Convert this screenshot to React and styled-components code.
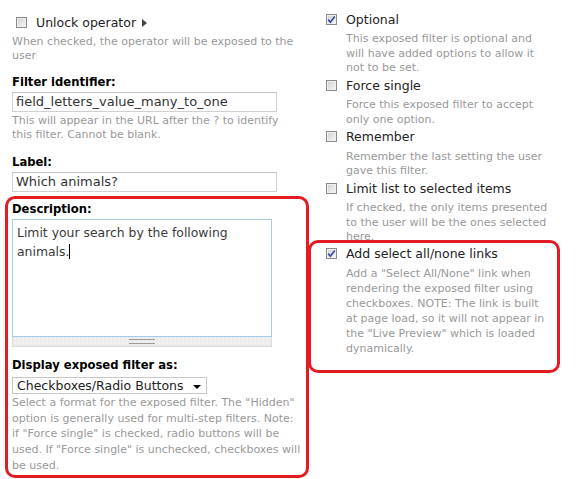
import React from "react";
import styled, { createGlobalStyle } from "styled-components";

const GlobalStyle = createGlobalStyle`
  html, body {
    margin: 0;
    background: #fff;
  }
  body {
    font-family: "DejaVu Sans", Verdana, sans-serif;
    color: #222;
  }
`;

const Page = styled.div`
  display: flex;
  align-items: flex-start;
  width: 580px;
  height: 479px;
  padding-left: 5px;
  box-sizing: border-box;
  overflow: hidden;
`;

const LeftColumn = styled.div`
  width: 304px;
  flex: none;
  box-sizing: border-box;
  padding-left: 7px;
  display: flex;
  flex-direction: column;
`;

const RightColumn = styled.div`
  width: 252px;
  flex: none;
  margin-left: -1px;
  padding-top: 10px;
  display: flex;
  flex-direction: column;
`;

const Highlight = styled.div`
  border: 3px solid #e31b23;
  border-radius: 10px;
  display: flex;
  flex-direction: column;
  position: relative;
  background: #fff;
  ${(p) =>
    p.$side === "left"
      ? `
    margin-left: -7px;
    margin-top: 4px;
    padding: 2px 4px 1px 4px;
  `
      : `
    margin-top: -5px;
    padding: 1px 8px 14px 11px;
  `}
`;

const CheckRow = styled.label`
  display: flex;
  align-items: center;
  height: 18px;
  font-size: 12.5px;
  color: #222;
  margin-top: ${(p) => p.$top || 0}px;
`;

const Box = styled.span`
  width: 11px;
  height: 11px;
  box-sizing: border-box;
  margin: 0 9px 0 4px;
  border: 1px solid #8a8a8a;
  background: linear-gradient(135deg, #cfcfcf 0%, #e6e6e6 55%, #f8f8f8 100%);
  box-shadow: inset 0 0 0 1px #f0f0f0;
  display: flex;
  align-items: center;
  justify-content: center;
  flex: none;
`;

const Arrow = styled.span`
  width: 0;
  height: 0;
  margin-left: 6px;
  border-top: 4.5px solid transparent;
  border-bottom: 4.5px solid transparent;
  border-left: 5px solid #444;
  position: relative;
  top: 1px;
`;

const Help = styled.div`
  font-size: 11px;
  color: #999;
  width: ${(p) => p.$width || 290}px;
  line-height: ${(p) => p.$lh || 14.3}px;
  margin-top: ${(p) => p.$top || 0}px;
  margin-left: ${(p) => p.$indent || 0}px;
`;

const Title = styled.div`
  font-size: 11.6px;
  font-weight: bold;
  color: #000;
  line-height: 16px;
  margin-top: ${(p) => p.$top || 0}px;
`;

const TextInput = styled.div`
  width: ${(p) => p.$width}px;
  height: 20px;
  box-sizing: border-box;
  border: 1px solid #d0d0d0;
  border-top-color: #c4c4c4;
  margin-top: 2px;
  padding: 0 3px;
  font-size: 13px;
  line-height: 18px;
  color: #333;
  white-space: nowrap;
`;

const Option = styled.div`
  display: flex;
  flex-direction: column;
  padding-left: ${(p) => (p.$boxed ? 0 : 14)}px;
  margin-bottom: ${(p) => (p.$boxed ? 0 : 0.5)}px;
`;

const TextArea = styled.div`
  width: 260px;
  margin-top: 2.7px;
  display: flex;
  flex-direction: column;
`;

const AreaBody = styled.div`
  height: 118px;
  box-sizing: border-box;
  border: 1px solid #a9cbe6;
  padding: 3px 4px;
  font-size: 12.4px;
  line-height: 19px;
  color: #3a3a3a;
`;

const Caret = styled.span`
  display: inline-block;
  width: 1px;
  height: 15px;
  background: #000;
  vertical-align: -3px;
`;

const Grip = styled.div`
  height: 10px;
  box-sizing: border-box;
  border: 1px solid #dcdcdc;
  border-top: none;
  background-color: #ececec;
  background-image: radial-gradient(#f8f8f8 0.6px, transparent 0.8px);
  background-size: 4px 4px;
  display: flex;
  align-items: center;
  justify-content: center;
`;

const GripLines = styled.span`
  width: 26px;
  height: 3px;
  border-top: 1px solid #9a9a9a;
  border-bottom: 1px solid #9a9a9a;
`;

const Select = styled.div`
  width: 195px;
  height: 17px;
  box-sizing: border-box;
  margin-top: 3.7px;
  border: 1px solid #c8c8c8;
  display: flex;
  align-items: center;
  justify-content: space-between;
  padding: 0 5px 0 4px;
  font-size: 12.5px;
  color: #222;
`;

const SelectArrow = styled.span`
  width: 0;
  height: 0;
  border-left: 4px solid transparent;
  border-right: 4px solid transparent;
  border-top: 4px solid #000;
  margin-top: 2px;
`;

function Check({ checked }) {
  return (
    <Box>
      {checked && (
        <svg width="9" height="9" viewBox="0 0 9 9">
          <path
            d="M1.2 4.6 L3.4 7.2 L7.8 1.4"
            fill="none"
            stroke="#3b4ea0"
            strokeWidth="1.7"
          />
        </svg>
      )}
    </Box>
  );
}

const options = [
  {
    label: "Optional",
    checked: true,
    help: "This exposed filter is optional and will have added options to allow it not to be set.",
  },
  {
    label: "Force single",
    help: "Force this exposed filter to accept only one option.",
  },
  {
    label: "Remember",
    help: "Remember the last setting the user gave this filter.",
  },
  {
    label: "Limit list to selected items",
    help: "If checked, the only items presented to the user will be the ones selected here.",
  },
];

export default function App() {
  return (
    <>
      <GlobalStyle />
      <Page>
        <LeftColumn>
          <CheckRow $top={13}>
            <Check />
            Unlock operator
            <Arrow />
          </CheckRow>
          <Help $top={3.5}>
            When checked, the operator will be exposed to the user
          </Help>

          <Title $top={11}>Filter identifier:</Title>
          <TextInput $width={265}>field_letters_value_many_to_one</TextInput>
          <Help $top={2} $lh={14}>
            This will appear in the URL after the ? to identify this filter.
            Cannot be blank.
          </Help>

          <Title $top={11.7}>Label:</Title>
          <TextInput $width={265}>Which animals?</TextInput>

          <Highlight $side="left">
            <Title>Description:</Title>
            <TextArea>
              <AreaBody>
                Limit your search by the following animals.
                <Caret />
              </AreaBody>
              <Grip>
                <GripLines />
              </Grip>
            </TextArea>

            <Title $top={10}>Display exposed filter as:</Title>
            <Select>
              Checkboxes/Radio Buttons
              <SelectArrow />
            </Select>
            <Help $top={0.8} $lh={15.75}>
              Select a format for the exposed filter. The "Hidden" option is
              generally used for multi-step filters. Note: if "Force single" is
              checked, radio buttons will be used. If "Force single" is
              unchecked, checkboxes will be used.
            </Help>
          </Highlight>
        </LeftColumn>

        <RightColumn>
          {options.map((o) => (
            <Option key={o.label}>
              <CheckRow>
                <Check checked={o.checked} />
                {o.label}
              </CheckRow>
              <Help $top={4} $indent={24} $width={206} $lh={14.5}>
                {o.help}
              </Help>
            </Option>
          ))}
          <Highlight $side="right">
            <Option $boxed>
              <CheckRow>
                <Check checked />
                Add select all/none links
              </CheckRow>
              <Help $top={4} $indent={24} $width={206} $lh={15}>
                Add a "Select All/None" link when rendering the exposed filter
                using checkboxes. NOTE: The link is built at page load, so it
                will not appear in the "Live Preview" which is loaded
                dynamically.
              </Help>
            </Option>
          </Highlight>
        </RightColumn>
      </Page>
    </>
  );
}
